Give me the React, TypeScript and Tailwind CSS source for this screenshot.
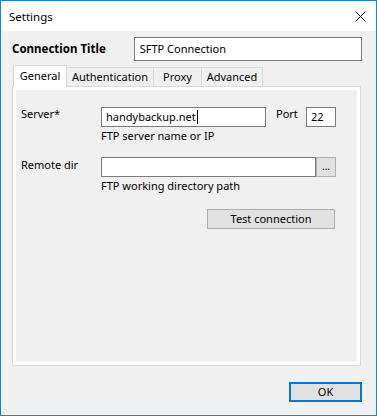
import React from "react";

export default function App() {
  const font = { fontFamily: '"Noto Sans", "Segoe UI", sans-serif' };
  return (
    <div
      style={font}
      className="w-[377px] h-[416px] border border-[#1883d7] bg-[#f0f0f0] flex flex-col text-[11px] text-black leading-[16px]"
    >
      {/* Title bar */}
      <div className="h-[30px] bg-white flex items-center justify-between pl-[8px] pr-[10px] shrink-0">
        <span className="text-[11.5px] pt-[1px]">Settings</span>
        <svg width="11" height="11" viewBox="0 0 11 11" className="mt-[1px]">
          <path d="M0.5 0.5 L10.5 10.5 M10.5 0.5 L0.5 10.5" stroke="#000" strokeWidth="1" />
        </svg>
      </div>

      {/* Body */}
      <div className="flex-1 flex flex-col pl-[11px] pr-[14px]">
        {/* Connection title */}
        <div className="flex items-center mt-[6px] h-[24px]">
          <span className="w-[122px] font-bold text-[11.5px]">Connection Title</span>
          <div className="w-[229px] h-[24px] bg-white border border-[#7a7a7a] flex items-center px-[5px]">
            SFTP Connection
          </div>
        </div>

        {/* Tabs */}
        <div className="mt-[4px] flex items-end h-[22px] relative z-10">
          <div className="ml-[1px] w-[54px] h-[22px] bg-white border border-b-0 border-[#d9d9d9] flex items-center justify-center pb-[1px]">
            General
          </div>
          <div className="w-[87px] h-[19px] border border-l-0 border-b-0 border-[#d9d9d9] flex items-center justify-center mb-[1px]">
            Authentication
          </div>
          <div className="w-[48px] h-[19px] border border-l-0 border-b-0 border-[#d9d9d9] flex items-center justify-center mb-[1px]">
            Proxy
          </div>
          <div className="w-[61px] h-[19px] border border-l-0 border-b-0 border-[#d9d9d9] flex items-center justify-center mb-[1px]">
            Advanced
          </div>
        </div>

        {/* Panel */}
        <div className="-mt-[1px] w-[349px] h-[280px] border border-[#d9d9d9] bg-white p-[3px]">
          <div className="w-full h-full bg-[#f0f0f0] pl-[5px] pt-[17px]">
            {/* Server row */}
            <div className="flex items-start h-[20px]">
              <span className="w-[80px] -mt-[1px]">Server*</span>
              <div className="w-[165px] h-[20px] bg-white border border-[#7a7a7a] flex items-center pl-[4px]">
                <span>handybackup.net</span>
                <span className="inline-block w-[1px] h-[14px] bg-black ml-[1px]" />
              </div>
              <span className="w-[30px] ml-[10px] -mt-[1px]">Port</span>
              <div className="w-[30px] h-[20px] bg-white border border-[#7a7a7a] flex items-center pl-[4px]">
                22
              </div>
            </div>
            <div className="ml-[80px] mt-[1px]">FTP server name or IP</div>

            {/* Remote dir row */}
            <div className="flex items-start h-[20px] mt-[13px]">
              <span className="w-[80px]">Remote dir</span>
              <div className="w-[215px] h-[20px] bg-white border border-[#7a7a7a]" />
              <div className="w-[20px] h-[20px] bg-[#e1e1e1] border border-[#adadad] flex items-center justify-center text-[10px] leading-[10px] pb-[2px]">
                ...
              </div>
            </div>
            <div className="ml-[80px] mt-[1px]">FTP working directory path</div>

            <div className="ml-[186px] mt-[15px] w-[128px] h-[20px] bg-[#e1e1e1] border border-[#adadad] flex items-center justify-center">
              Test connection
            </div>
          </div>
        </div>

        {/* Footer */}
        <div className="flex justify-end mt-[16px]">
          <div className="w-[73px] h-[20px] bg-[#e1e1e1] border-2 border-[#0078d7] flex items-center justify-center">
            OK
          </div>
        </div>
      </div>
    </div>
  );
}
